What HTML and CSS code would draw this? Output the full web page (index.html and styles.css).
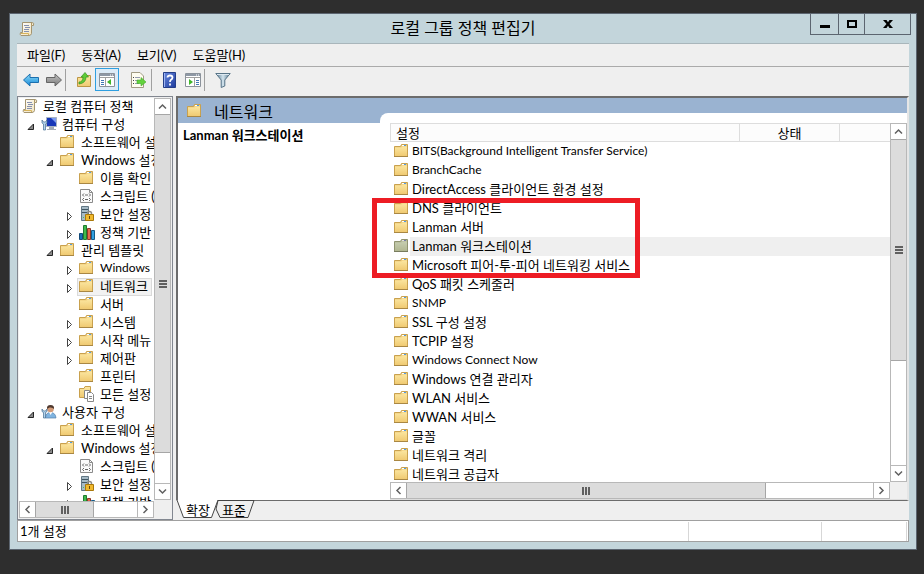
FILE: index.html
```
<!DOCTYPE html>
<html lang="ko">
	<head>
		<meta charset="UTF-8">
		<title>로컬 그룹 정책 편집기</title>
		<link rel="stylesheet" href="styles.css">
	</head>
	<body>
		<svg class="defs" width="0" height="0" aria-hidden="true">
			<defs>
				<linearGradient id="gFolder" x1="0" y1="0" x2="0" y2="1"><stop offset="0" stop-color="#fbe6a0"/><stop offset="1" stop-color="#f0ca72"/></linearGradient>
				<linearGradient id="gPaper" x1="0" y1="0" x2="1" y2="1"><stop offset="0" stop-color="#ffffff"/><stop offset="1" stop-color="#efe0b8"/></linearGradient>
				<linearGradient id="gBlue" x1="0" y1="0" x2="0" y2="1"><stop offset="0" stop-color="#8fdcf8"/><stop offset="1" stop-color="#1488d8"/></linearGradient>
				<linearGradient id="gGray" x1="0" y1="0" x2="0" y2="1"><stop offset="0" stop-color="#c4c4c4"/><stop offset="1" stop-color="#777777"/></linearGradient>
				<linearGradient id="gHelp" x1="0" y1="0" x2="1" y2="1"><stop offset="0" stop-color="#6a8ae0"/><stop offset="1" stop-color="#1c3a9c"/></linearGradient>
				<linearGradient id="gFunnel" x1="0" y1="0" x2="1" y2="0"><stop offset="0" stop-color="#4d7088"/><stop offset="0.5" stop-color="#d3e4ee"/><stop offset="1" stop-color="#4d7088"/></linearGradient>
			</defs>
			<symbol id="folder" viewBox="1 0 16 16">
				<path d="M1.500 3.500H7.500L8.500 1.500H14.500V13.500H1.500Z" fill="#f0cd7c" stroke="#c9a14e"/>
				<path d="M2 4.500H8.500L9.500 3.500H14V13H2Z" fill="url(#gFolder)"/>
				<path d="M9 2.500H13" stroke="#fff"/><path d="M11 2.500H13" stroke="#4d9be6"/>
				<path d="M1 13.500H15" stroke="#a98743"/>
			</symbol>
			<symbol id="scroll" viewBox="0 0 16 16">
				<path d="M3.500 1.500H13Q15.500 1.500 14.500 4.500H12.500V12.500Q12 14.500 10 14.500H2Q.5 13.500 1.500 11.500H3.500Z" fill="url(#gPaper)" stroke="#a39470"/>
				<path d="M2 12.500H9.500V14" fill="none" stroke="#d8b45c"/>
				<path d="M12.500 2V4.500" stroke="#b39a60"/>
				<path d="M5 4.500H10M6 6.500H11M5 8.500H10M5 10.500H10" stroke="#8490b0"/>
			</symbol>
			<symbol id="computer" viewBox="0 0 16 16">
				<path d="M5.500 1.500H15.500V10.500H5.500Z" fill="#1838b8" stroke="#a8b4c4"/>
				<path d="M10 2H15V7Z" fill="#7d9cf0"/>
				<path d="M8 11H13V13H15V14H6V13H8Z" fill="#a4adb6"/>
				<path d="M1 4V7L2.500 8V14H4.500V8L6 7V4L4.500 6H2.500Z" fill="#b4d4ec" stroke="#426c90" stroke-width=".7"/>
			</symbol>
			<symbol id="user" viewBox="0 0 16 16">
				<path d="M4.500 14Q4.500 8.500 9.500 8.500T15 14Z" fill="#80b4e0" stroke="#5580aa" stroke-width=".7"/>
				<path d="M8 8L9.500 11L11.500 8Z" fill="#fff"/>
				<circle cx="9.500" cy="5" r="3.300" fill="#d39b78"/>
				<path d="M6 5Q5.500 1 9.500 1T13 5Q11.500 3 8.500 3.500Z" fill="#503a30"/>
				<path d="M1 5V7.500L2.500 8.500V14H4.500V8.500L6 7.500V5L4.500 7H2.500Z" fill="#b4d4ec" stroke="#426c90" stroke-width=".7"/>
			</symbol>
			<symbol id="script" viewBox="1 0 16 16">
				<path d="M2.500 1.500H11.500L14.500 4.500V14.500H2.500Z" fill="#fafafa" stroke="#8b8b8b"/>
				<path d="M11.500 1.500V4.500H14.500" fill="none" stroke="#8b8b8b"/>
				<path d="M6 5.500L4.500 7L6 8.500M11 5.500L12.500 7L11 8.500M6 10L4.500 11.500L6 13M11 10L12.500 11.500L11 13M7 7H10M7 11.500H10" fill="none" stroke="#666"/>
			</symbol>
			<symbol id="security" viewBox="0 0 16 16">
				<path d="M2.500 .5H9.500V14.500H2.500Z" fill="#a6bac6" stroke="#627885"/>
				<path d="M3 3.500H9M3 6.500H9" stroke="#405662"/><path d="M4 11.500H5" stroke="#49c849"/>
				<path d="M8.500 9V7.500Q8.500 5.500 10.500 5.500T12.500 7.500V9" fill="none" stroke="#8d8d86" stroke-width="1.500"/>
				<path d="M6.500 8.500H14.500V14.500H6.500Z" fill="#f0b92e" stroke="#a9780b"/><path d="M10.500 10V13" stroke="#674a0b"/>
			</symbol>
			<symbol id="bars" viewBox="0 0 16 16">
				<path d="M.5 9.500H3.500V15.500H.5Z" fill="#1673b8" stroke="#124a78"/>
				<path d="M4.500 1.500H7.500V15.500H4.500Z" fill="#3fba4d" stroke="#207c30"/>
				<path d="M8.500 4.500H11.500V15.500H8.500Z" fill="#e5694c" stroke="#893a28"/>
				<path d="M12.500 6.500H15.500V15.500H12.500Z" fill="#32a0e0" stroke="#155b88"/>
			</symbol>
			<symbol id="allset" viewBox="1 0 16 16">
				<path d="M1.500 2.500H6L7 .5H12.500V11.500H1.500Z" fill="url(#gFolder)" stroke="#c9a04c"/>
				<path d="M6.500 4.500H11.500V12.500H6.500Z" fill="#fff" stroke="#888"/>
				<path d="M9.500 6.500H13.500L15.500 8.500V15.500H9.500Z" fill="#fff" stroke="#888"/>
				<path d="M11 10.500H14M11 12.500H14" stroke="#888"/>
			</symbol>
			<symbol id="open" viewBox="0 0 9 9"><path d="M6.500 2V7.500H1Z" fill="#8a8a8a" stroke="#262626"/></symbol>
			<symbol id="closed" viewBox="0 0 9 9"><path d="M2.500 .5L6.500 4.500L2.500 8.500Z" fill="#fff" stroke="#444"/></symbol>
			<symbol id="up" viewBox="0 0 9 9"><path d="M1 6.500L4.500 3L8 6.500" fill="none" stroke="#606060" stroke-width="1.500"/></symbol>
			<symbol id="down" viewBox="0 0 9 9"><path d="M1 2.500L4.500 6L8 2.500" fill="none" stroke="#606060" stroke-width="1.500"/></symbol>
			<symbol id="prev" viewBox="0 0 9 9"><path d="M6.500 1L3 4.500L6.500 8" fill="none" stroke="#606060" stroke-width="1.500"/></symbol>
			<symbol id="next" viewBox="0 0 9 9"><path d="M2.500 1L6 4.500L2.500 8" fill="none" stroke="#606060" stroke-width="1.500"/></symbol>
		</svg>

		<div class="window">
			<header class="titlebar">
				<svg class="icon"><use href="#scroll"/></svg>
				<h1>로컬 그룹 정책 편집기</h1>
				<div class="controls">
					<button class="min" aria-label="최소화"><svg width="10" height="10"><path d="M0 6H10V9H0Z"/></svg></button>
					<button aria-label="최대화"><svg width="10" height="10"><path d="M1 2H9V8H1Z" fill="none" stroke="#000" stroke-width="2"/></svg></button>
					<button class="close" aria-label="닫기"><svg width="10" height="10"><path d="M0 1H3.500L5 3.200L6.500 1H10L6.500 5L10 9H6.500L5 6.800L3.500 9H0L3.500 5Z"/></svg></button>
				</div>
			</header>

			<div class="client">
				<nav class="menubar">
					<button>파일(F)</button>
					<button>동작(A)</button>
					<button>보기(V)</button>
					<button>도움말(H)</button>
				</nav>

				<div class="toolbar">
					<button aria-label="뒤로"><svg class="icon"><path d="M.5 8L7 2V5.500H15.500V10.500H7V14Z" fill="url(#gBlue)" stroke="#1c6fae"/></svg></button>
					<button aria-label="앞으로"><svg class="icon"><path d="M15.500 8L9 2V5.500H.5V10.500H9V14Z" fill="url(#gGray)" stroke="#656565"/></svg></button>
					<span class="sep"></span>
					<button aria-label="위로"><svg class="icon"><path d="M1.500 5.500H8L9 3.500H14.500V14.500H1.500Z" fill="url(#gFolder)" stroke="#bd9545"/><path d="M3 10Q7 10 7 5H5L9 .5L12.500 5H10Q10 11 3 12Z" fill="#5fcb36" stroke="#339421" stroke-width=".7"/></svg></button>
					<button class="on" aria-label="콘솔 트리 표시"><svg class="icon"><path d="M.5 1.500H15.500V14.500H.5Z" fill="#fff" stroke="#8b929b"/><path d="M1 3H15" stroke="#8e98a5" stroke-width="2"/><path d="M11 3H12M13 3H14" stroke="#fff"/><path d="M1 5.500H15M6.500 6V14" stroke="#a0a0a0"/><path d="M2 8.500H5M2 10.500H5M2 12.500H5" stroke="#4178b4"/><path d="M12 7V13L8 10Z" fill="#3fb62a"/></svg></button>
					<button class="export" aria-label="목록 내보내기"><svg class="icon"><path d="M1.500 .5H10L13.500 4V15.500H1.500Z" fill="#fffdf0" stroke="#a19b83"/><path d="M3 5.500H4M3 8.500H4M3 11.500H4" stroke="#444"/><path d="M5 5.500H10M5 8.500H9M5 11.500H9" stroke="#969cb0"/><path d="M7 8H11V5.500L16 10L11 14V11.500H7Z" fill="#63d23d" stroke="#43a92b" stroke-width=".6"/></svg></button>
					<span class="sep"></span>
					<button aria-label="도움말"><svg class="icon"><path d="M1.500 .5H13.500V15.500H1.500Z" fill="url(#gHelp)" stroke="#243e88"/><path d="M2.500 1V15" stroke="#9db4f2"/><path d="M5.500 5.500Q5.500 3.500 8 3.500T10.500 5.500Q10.500 7 9 7.800Q8 8.500 8 10M8 11.500V13.500" fill="none" stroke="#fff" stroke-width="1.800"/></svg></button>
					<button aria-label="작업 창 표시"><svg class="icon"><path d="M.5 1.500H15.500V14.500H.5Z" fill="#fff" stroke="#8b929b"/><path d="M1 3H15" stroke="#8e98a5" stroke-width="2"/><path d="M11 3H12M13 3H14" stroke="#fff"/><path d="M1 5.500H15M9.500 6V14" stroke="#a0a0a0"/><path d="M11 8.500H14M11 10.500H14M11 12.500H14" stroke="#4178b4"/><path d="M4 7V13L8 10Z" fill="#3fb62a"/></svg></button>
					<span class="sep"></span>
					<button aria-label="필터"><svg class="icon"><path d="M.8 1.500H15.200L9.800 8V14L6.200 15.500V8Z" fill="url(#gFunnel)" stroke="#587488"/><path d="M2 2.500H14" stroke="#dce8f0"/></svg></button>
				</div>

				<main class="panes">
					<section class="tree-pane">
						<ul class="tree">
							<li class="root"><svg class="icon"><use href="#scroll"/></svg><span>로컬 컴퓨터 정책</span></li>
							<li class="l1"><svg class="arrow"><use href="#open"/></svg><svg class="icon"><use href="#computer"/></svg><span>컴퓨터 구성</span></li>
							<li class="l2"><svg class="icon"><use href="#folder"/></svg><span>소프트웨어 설정</span></li>
							<li class="l2"><svg class="arrow"><use href="#open"/></svg><svg class="icon"><use href="#folder"/></svg><span>Windows 설정</span></li>
							<li class="l3"><svg class="icon"><use href="#folder"/></svg><span>이름 확인</span></li>
							<li class="l3"><svg class="icon"><use href="#script"/></svg><span>스크립트 (시작/종료)</span></li>
							<li class="l3"><svg class="arrow"><use href="#closed"/></svg><svg class="icon"><use href="#security"/></svg><span>보안 설정</span></li>
							<li class="l3"><svg class="arrow"><use href="#closed"/></svg><svg class="icon"><use href="#bars"/></svg><span>정책 기반</span></li>
							<li class="l2"><svg class="arrow"><use href="#open"/></svg><svg class="icon"><use href="#folder"/></svg><span>관리 템플릿</span></li>
							<li class="l3"><svg class="arrow"><use href="#closed"/></svg><svg class="icon"><use href="#folder"/></svg><span class="en">Windows</span></li>
							<li class="l3 now"><svg class="arrow"><use href="#closed"/></svg><svg class="icon"><use href="#folder"/></svg><span>네트워크</span></li>
							<li class="l3"><svg class="icon"><use href="#folder"/></svg><span>서버</span></li>
							<li class="l3"><svg class="arrow"><use href="#closed"/></svg><svg class="icon"><use href="#folder"/></svg><span>시스템</span></li>
							<li class="l3"><svg class="arrow"><use href="#closed"/></svg><svg class="icon"><use href="#folder"/></svg><span>시작 메뉴</span></li>
							<li class="l3"><svg class="arrow"><use href="#closed"/></svg><svg class="icon"><use href="#folder"/></svg><span>제어판</span></li>
							<li class="l3"><svg class="icon"><use href="#folder"/></svg><span>프린터</span></li>
							<li class="l3"><svg class="icon"><use href="#allset"/></svg><span>모든 설정</span></li>
							<li class="l1"><svg class="arrow"><use href="#open"/></svg><svg class="icon"><use href="#user"/></svg><span>사용자 구성</span></li>
							<li class="l2"><svg class="icon"><use href="#folder"/></svg><span>소프트웨어 설정</span></li>
							<li class="l2"><svg class="arrow"><use href="#open"/></svg><svg class="icon"><use href="#folder"/></svg><span>Windows 설정</span></li>
							<li class="l3"><svg class="icon"><use href="#script"/></svg><span>스크립트 (로그온/로그오프)</span></li>
							<li class="l3"><svg class="arrow"><use href="#closed"/></svg><svg class="icon"><use href="#security"/></svg><span>보안 설정</span></li>
							<li class="l3"><svg class="arrow"><use href="#closed"/></svg><svg class="icon"><use href="#bars"/></svg><span>정책 기반</span></li>
						</ul>
						<div class="vbar">
							<button aria-label="위로 스크롤"><svg><use href="#up"/></svg></button>
							<div class="track"><div class="thumb tree-v"><i></i></div></div>
							<button aria-label="아래로 스크롤"><svg><use href="#down"/></svg></button>
						</div>
						<div class="hbar">
							<button aria-label="왼쪽으로 스크롤"><svg><use href="#prev"/></svg></button>
							<div class="track"><div class="thumb tree-h"><i></i></div></div>
							<button aria-label="오른쪽으로 스크롤"><svg><use href="#next"/></svg></button>
						</div>
					</section>

					<div class="right">
						<section class="result">
							<div class="head">
								<svg class="icon"><use href="#folder"/></svg>
								<h2>네트워크</h2>
							</div>
							<div class="body">
								<div class="info">Lanman 워크스테이션</div>
								<div class="list-pane">
									<div class="list">
										<table>
											<thead><tr><th class="name">설정</th><th class="state">상태</th><th class="note"></th></tr></thead>
											<tbody>
												<tr><td colspan="3"><svg class="icon"><use href="#folder"/></svg><span class="en">BITS(Background Intelligent Transfer Service)</span></td></tr>
												<tr><td colspan="3"><svg class="icon"><use href="#folder"/></svg><span class="en">BranchCache</span></td></tr>
												<tr><td colspan="3"><svg class="icon"><use href="#folder"/></svg><span>DirectAccess 클라이언트 환경 설정</span></td></tr>
												<tr><td colspan="3"><svg class="icon"><use href="#folder"/></svg><span>DNS 클라이언트</span></td></tr>
												<tr><td colspan="3"><svg class="icon"><use href="#folder"/></svg><span>Lanman 서버</span></td></tr>
												<tr class="now"><td colspan="3"><svg class="icon"><use href="#folder"/></svg><span>Lanman 워크스테이션</span></td></tr>
												<tr><td colspan="3"><svg class="icon"><use href="#folder"/></svg><span>Microsoft 피어-투-피어 네트워킹 서비스</span></td></tr>
												<tr><td colspan="3"><svg class="icon"><use href="#folder"/></svg><span>QoS 패킷 스케줄러</span></td></tr>
												<tr><td colspan="3"><svg class="icon"><use href="#folder"/></svg><span class="en">SNMP</span></td></tr>
												<tr><td colspan="3"><svg class="icon"><use href="#folder"/></svg><span>SSL 구성 설정</span></td></tr>
												<tr><td colspan="3"><svg class="icon"><use href="#folder"/></svg><span>TCPIP 설정</span></td></tr>
												<tr><td colspan="3"><svg class="icon"><use href="#folder"/></svg><span class="en">Windows Connect Now</span></td></tr>
												<tr><td colspan="3"><svg class="icon"><use href="#folder"/></svg><span>Windows 연결 관리자</span></td></tr>
												<tr><td colspan="3"><svg class="icon"><use href="#folder"/></svg><span>WLAN 서비스</span></td></tr>
												<tr><td colspan="3"><svg class="icon"><use href="#folder"/></svg><span>WWAN 서비스</span></td></tr>
												<tr><td colspan="3"><svg class="icon"><use href="#folder"/></svg><span>글꼴</span></td></tr>
												<tr><td colspan="3"><svg class="icon"><use href="#folder"/></svg><span>네트워크 격리</span></td></tr>
												<tr><td colspan="3"><svg class="icon"><use href="#folder"/></svg><span>네트워크 공급자</span></td></tr>
											</tbody>
										</table>
									</div>
									<div class="vbar">
										<button aria-label="위로 스크롤"><svg><use href="#up"/></svg></button>
										<div class="track"><div class="thumb list-v"><i></i></div></div>
										<button aria-label="아래로 스크롤"><svg><use href="#down"/></svg></button>
									</div>
									<div class="hbar">
										<button aria-label="왼쪽으로 스크롤"><svg><use href="#prev"/></svg></button>
										<div class="track"><div class="thumb list-h"><i></i></div></div>
										<button aria-label="오른쪽으로 스크롤"><svg><use href="#next"/></svg></button>
									</div>
									<div class="mark"></div>
								</div>
							</div>
						</section>
						<div class="tabs">
							<svg class="tab-lines" width="82" height="19">
								<path d="M42 .5H78L72 17.500H44L40 9Z" fill="#efefef" stroke="#444"/>
								<path d="M0 0L7.500 17.500H35.500L42 0Z" fill="#fff"/>
								<path d="M1 0L7.500 17.500H35.500L42 0" fill="none" stroke="#444"/>
							</svg>
							<button>확장</button>
							<button>표준</button>
						</div>
					</div>
				</main>

				<footer class="status">
					<span class="msg">1개 설정</span>
					<span class="cell"></span>
					<span class="cell last"></span>
				</footer>
			</div>
		</div>
	</body>
</html>
```

FILE: styles.css
```
*{margin: 0;padding: 0;box-sizing: border-box;}
html,body{
	height: 100%;
}
body{
	display: flex;
	padding: 13px 7px 24px 9px;
	background: #2e2e2e;
	font: 13px/18px Lato, "Noto Sans CJK KR", sans-serif;
	color: #000;
	overflow: hidden;
}
ul{list-style: none;}
button{
	border: 0;
	background: none;
	font: inherit;
	color: inherit;
}
svg{
	display: block;
	flex: none;
}
.defs{position: absolute;}
.icon{
	width: 16px;
	height: 16px;
}
.en{font-size: 12px;}

/* window frame */
.window{
	flex: 1;
	min-width: 0;
	display: flex;
	flex-direction: column;
	padding: 0 7px;
	border: 1px solid #5c6570;
	background: #c3d5db;
}
.titlebar{
	display: grid;
	grid-template-columns: 99px 1fr 99px;
	height: 29px;
	flex: none;
}
.titlebar .icon{
	margin: 7px 0 0 2px;
}
.titlebar h1{
	font-size: 16px;
	font-weight: normal;
	line-height: 28px;
	text-align: center;
}
.controls{
	display: flex;
	height: 21px;
	margin-right: -2px;
	border: 1px solid #5c6570;
	border-top: 0;
}
.controls button{
	width: 26px;
	display: flex;
	align-items: center;
	justify-content: center;
	border-right: 1px solid #5c6570;
}
.controls button.min{
	width: 28px;
}
.controls button.close{
	flex: 1;
	border-right: 0;
}
.client{
	flex: 1;
	min-height: 0;
	display: flex;
	flex-direction: column;
	margin-bottom: 7px;
	border-top: 1px solid #a9b6bb;
	background: #efefef;
}

/* menu and toolbar */
.menubar{
	display: flex;
	gap: 16px;
	height: 23px;
	flex: none;
	padding-left: 10px;
	border-bottom: 1px solid #aaa;
}
.toolbar{
	display: flex;
	align-items: center;
	height: 29px;
	flex: none;
	padding: 0 0 4px 2px;
}
.toolbar button{
	width: 23px;
	height: 23px;
	display: flex;
	align-items: center;
	justify-content: center;
}
.toolbar button.on{
	width: 24px;
	background: #dcebf7;
	border: 1px solid #2f9fe0;
}
.toolbar button.export{
	margin: 0 2px 0 7px;
}
.toolbar .sep{
	width: 1px;
	height: 22px;
	background: #a0a0a0;
	margin: 0 6px 0 0;
}

/* panes */
.panes{
	flex: 1;
	min-height: 0;
	display: flex;
	gap: 3px;
}
.tree-pane{
	width: 156px;
	flex: none;
	display: grid;
	grid-template-columns: 1fr 18px;
	grid-template-rows: 1fr 18px;
	padding: 1px 0 0 1px;
	border: 1px solid #828790;
	background: #efefef;
}
.tree{
	min-height: 0;
	overflow: hidden;
	background: #fff;
	white-space: nowrap;
}
.tree li{
	display: flex;
	align-items: center;
	height: 18px;
	padding-bottom: 2px;
}
.tree span{
	margin-left: 3px;
	padding: 0 2px;
}
.tree .arrow{
	width: 9px;
	height: 9px;
	margin: 4px 5px 0 -14px;
}
.root{padding-left: 3px;}
.l1{padding-left: 22px;}
.l2{padding-left: 41px;}
.l3{padding-left: 60px;}
.tree .now{
	margin: 0 2px 0 58px;
	padding: 0 0 2px 1px;
	border: 1px solid #dadada;
	background: #f2f2f2;
}
.right{
	flex: 1;
	min-width: 0;
	display: flex;
	flex-direction: column;
}
.result{
	flex: 1;
	min-height: 0;
	display: flex;
	flex-direction: column;
	border: 2px solid #6c6c6c;
	border-bottom-width: 1px;
	border-right-color: #e6e6e6;
	background: #fff;
}
.head{
	position: relative;
	display: flex;
	height: 25px;
	flex: none;
	padding: 5px 9px 0;
	gap: 11px;
	background: #9ab3d1;
}
.head h2{
	font-size: 16px;
	font-weight: normal;
	line-height: 18px;
}
/* white lip above the list */
.head:after{
	content: "";
	position: absolute;
	left: 202px;
	right: 0;
	bottom: 0;
	height: 10px;
	border-top-left-radius: 8px;
	background: #fff;
}
.body{
	flex: 1;
	min-height: 0;
	display: flex;
}
.info{
	width: 212px;
	flex: none;
	padding: 3px 5px;
	font-weight: bold;
}
.list-pane{
	position: relative;
	flex: 1;
	min-width: 0;
	display: grid;
	grid-template-columns: 1fr 17px;
	grid-template-rows: 1fr 17px;
	background: #efefef;
	border-bottom: 1px solid #ddd;
}
.list{
	min-width: 0;
	min-height: 0;
	overflow: hidden;
	background: #fff;
}
table{
	width: 100%;
	table-layout: fixed;
	border-collapse: separate;
	border-spacing: 0;
	white-space: nowrap;
}
th{
	height: 19px;
	line-height: 16px;
	font-weight: normal;
	border: 1px solid #ddd;
	border-left: 0;
	background: #fcfcfc;
}
th.name{
	padding-left: 5px;
	border-left: 1px solid #ddd;
	text-align: left;
}
th.state{width: 100px;}
th.note{width: 50px;border-right: 0;}
td{
	height: 19px;
}
td .icon{
	float: left;
	margin: 1px 0 0 4px;
}
td span{
	display: block;
	padding-left: 2px;
	height: 19px;
	line-height: 18px;
	overflow: hidden;
}
tr.now span{
	background: #efefef;
}
tr.now .icon{
	filter: hue-rotate(25deg) saturate(0.4) brightness(0.88);
}
.mark{
	position: absolute;
	left: -18px;
	top: 75px;
	width: 268px;
	height: 80px;
	border: 5px solid #ed1c24;
}

/* scroll bars */
.vbar,.hbar{
	display: flex;
	background: #fff;
	border: 1px solid #b8b8b8;
}
.vbar{flex-direction: column;}
.vbar button,.hbar button{
	width: 15px;
	height: 15px;
	flex: none;
	display: flex;
	align-items: center;
	justify-content: center;
}
.vbar button svg,.hbar button svg{
	width: 9px;
	height: 9px;
}
.tree-pane .vbar,.tree-pane .hbar{
	margin: 0 1px 1px 0;
}
.tree-pane .hbar{margin-right: 0;}
.track{
	flex: 1;
	min-width: 0;
	min-height: 0;
	display: flex;
}
.vbar .track{border-bottom: 1px solid #b8b8b8;flex-direction: column;}
.hbar .track{border-right: 1px solid #b8b8b8;}
.thumb{
	display: flex;
	align-items: center;
	justify-content: center;
	border: 1px solid #a6a6a6;
	background: #dcdcdc;
}
.vbar .thumb{border-width: 1px 0;}
.hbar .thumb{border-width: 0 1px;}
.thumb i{
	width: 8px;
	height: 8px;
	background: repeating-linear-gradient(#606060 0 2px,transparent 2px 3px);
}
.hbar .thumb i{
	background: repeating-linear-gradient(90deg,#606060 0 2px,transparent 2px 3px);
}
.tree-v{height: 92%;}
.tree-h{width: 58%;}
.list-v{height: 68%;}
.list-h{width: 77%;}

/* tabs and status bar */
.tabs{
	position: relative;
	display: flex;
	height: 19px;
	flex: none;
	padding-left: 10px;
	gap: 12px;
}
.tab-lines{
	position: absolute;
	left: 0;
	top: -1px;
}
.tabs button{
	position: relative;
	height: 18px;
}
.status{
	display: flex;
	height: 22px;
	flex: none;
	border: 1px solid #a0a0a0;
	background: #fff;
	line-height: 20px;
}
.status .msg{
	flex: 1;
	padding-left: 2px;
}
.status .cell{
	width: 133px;
	margin-top: 1px;
	border-left: 1px solid #d7d7d7;
}
.status .last{
	width: 86px;
	margin-right: 1px;
	border-right: 1px solid #d7d7d7;
}
```
